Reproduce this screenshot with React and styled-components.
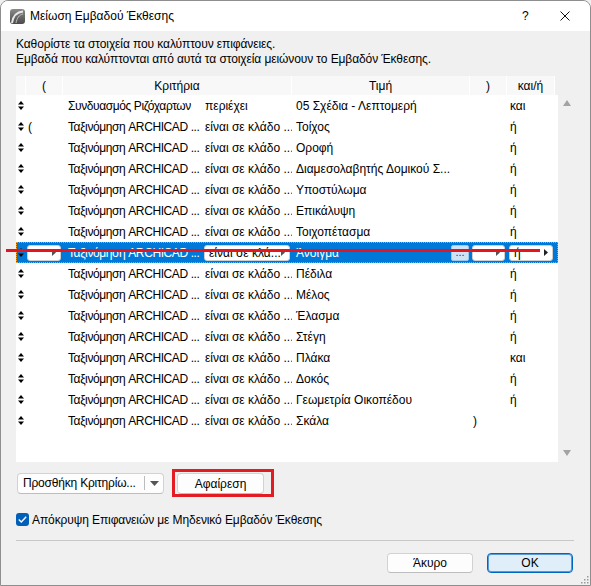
import styled, { createGlobalStyle } from "styled-components";

const GlobalStyle = createGlobalStyle`
  html, body {
    margin: 0;
    padding: 0;
    background: #f0f0f0;
  }
  body {
    font-family: "Liberation Sans", Arial, sans-serif;
    font-size: 12px;
    color: #000;
  }
  * {
    box-sizing: border-box;
  }
`;

const rows = [
  { open: "", crit: "Συνδυασμός Ριζόχαρτων", op: "περιέχει", value: "05 Σχέδια - Λεπτομερή", close: "", logic: "και" },
  { open: "(", crit: "Ταξινόμηση ARCHICAD ...", op: "είναι σε κλάδο ...", value: "Τοίχος", close: "", logic: "ή" },
  { open: "", crit: "Ταξινόμηση ARCHICAD ...", op: "είναι σε κλάδο ...", value: "Οροφή", close: "", logic: "ή" },
  { open: "", crit: "Ταξινόμηση ARCHICAD ...", op: "είναι σε κλάδο ...", value: "Διαμεσολαβητής Δομικού Σ...", close: "", logic: "ή" },
  { open: "", crit: "Ταξινόμηση ARCHICAD ...", op: "είναι σε κλάδο ...", value: "Υποστύλωμα", close: "", logic: "ή" },
  { open: "", crit: "Ταξινόμηση ARCHICAD ...", op: "είναι σε κλάδο ...", value: "Επικάλυψη", close: "", logic: "ή" },
  { open: "", crit: "Ταξινόμηση ARCHICAD ...", op: "είναι σε κλάδο ...", value: "Τοιχοπέτασμα", close: "", logic: "ή" },
  { open: "", crit: "Ταξινόμηση ARCHICAD ...", op: "είναι σε κλά...", value: "Άνοιγμα", close: "", logic: "ή", selected: true },
  { open: "", crit: "Ταξινόμηση ARCHICAD ...", op: "είναι σε κλάδο ...", value: "Πέδιλα", close: "", logic: "ή" },
  { open: "", crit: "Ταξινόμηση ARCHICAD ...", op: "είναι σε κλάδο ...", value: "Μέλος", close: "", logic: "ή" },
  { open: "", crit: "Ταξινόμηση ARCHICAD ...", op: "είναι σε κλάδο ...", value: "Έλασμα", close: "", logic: "ή" },
  { open: "", crit: "Ταξινόμηση ARCHICAD ...", op: "είναι σε κλάδο ...", value: "Στέγη", close: "", logic: "ή" },
  { open: "", crit: "Ταξινόμηση ARCHICAD ...", op: "είναι σε κλάδο ...", value: "Πλάκα", close: "", logic: "και" },
  { open: "", crit: "Ταξινόμηση ARCHICAD ...", op: "είναι σε κλάδο ...", value: "Δοκός", close: "", logic: "ή" },
  { open: "", crit: "Ταξινόμηση ARCHICAD ...", op: "είναι σε κλάδο ...", value: "Γεωμετρία Οικοπέδου", close: "", logic: "ή" },
  { open: "", crit: "Ταξινόμηση ARCHICAD ...", op: "είναι σε κλάδο ...", value: "Σκάλα", close: ")", logic: "" },
];

function AppIcon() {
  return (
    <svg width="15" height="15" viewBox="0 0 15 15">
      <defs>
        <linearGradient id="ac" x1="0" y1="0" x2="0" y2="1">
          <stop offset="0" stopColor="#8a8a8a" />
          <stop offset="1" stopColor="#4a4a4a" />
        </linearGradient>
      </defs>
      <rect x="0" y="0" width="15" height="15" rx="3" fill="url(#ac)" />
      <path d="M2 14 C3 7 7 3 13 2.5" stroke="#e8e8e8" strokeWidth="2" fill="none" />
      <path d="M6 14 C7 9 9 6 13 5" stroke="#bdbdbd" strokeWidth="1" fill="none" />
    </svg>
  );
}

function SortIcon() {
  return (
    <svg width="6" height="9" viewBox="0 0 6 9">
      <path d="M0 3.5 L3 0 L6 3.5 Z" fill="#000" />
      <path d="M0 5.5 L3 9 L6 5.5 Z" fill="#000" />
    </svg>
  );
}

function RightArrow({ dark }) {
  return (
    <svg width="4" height="7" viewBox="0 0 4 7">
      <path d="M0 0 L4 3.5 L0 7 Z" fill={dark ? "#222" : "#555"} />
    </svg>
  );
}

export default function App() {
  return (
    <>
      <GlobalStyle />
      <Window>
        <TitleBar>
          <AppIcon />
          <Title>Μείωση Εμβαδού Έκθεσης</Title>
          <TitleHelp>?</TitleHelp>
          <TitleClose>
            <svg width="10" height="10" viewBox="0 0 10 10">
              <path d="M0.5 0.5 L9.5 9.5 M9.5 0.5 L0.5 9.5" stroke="#111" strokeWidth="1" />
            </svg>
          </TitleClose>
        </TitleBar>

        <Body>
          <Description>
            Καθορίστε τα στοιχεία που καλύπτουν επιφάνειες.
            <br />
            Εμβαδά που καλύπτονται από αυτά τα στοιχεία μειώνουν το Εμβαδόν Έκθεσης.
          </Description>

          <Table>
            <ListPane>
              <HeaderStrip>
                <HeaderRow>
                  <HeadCell />
                  <HeadCell>(</HeadCell>
                  <HeadCell $span={2}>Κριτήρια</HeadCell>
                  <HeadCell>Τιμή</HeadCell>
                  <HeadCell>)</HeadCell>
                  <HeadCell>και/ή</HeadCell>
                </HeaderRow>
              </HeaderStrip>

              {rows.map((r, i) =>
                r.selected ? (
                  <Row key={i} $selected>
                    <SortCell>
                      <SortIcon />
                    </SortCell>
                    <Cell $pad={1}>
                      <Combo $width={34}>
                        <span />
                        <RightArrow />
                      </Combo>
                    </Cell>
                    <CritCell>{r.crit}</CritCell>
                    <Cell $pad={3}>
                      <Combo $width={86}>
                        <span>{r.op}</span>
                        <RightArrow />
                      </Combo>
                    </Cell>
                    <Cell $pad={4}>
                      <ValueText>{r.value}</ValueText>
                      <DotsButton>...</DotsButton>
                    </Cell>
                    <Cell $pad={2}>
                      <Combo $width={33}>
                        <span />
                        <RightArrow />
                      </Combo>
                    </Cell>
                    <Cell $pad={2}>
                      <Combo $width={44}>
                        <span>{r.logic}</span>
                        <RightArrow dark />
                      </Combo>
                    </Cell>
                    <RedLine />
                  </Row>
                ) : (
                  <Row key={i}>
                    <SortCell>
                      <SortIcon />
                    </SortCell>
                    <Cell $pad={2}>{r.open}</Cell>
                    <CritCell>{r.crit}</CritCell>
                    <Cell $pad={4}>{r.op}</Cell>
                    <Cell $pad={4}>{r.value}</Cell>
                    <Cell $pad={3}>{r.close}</Cell>
                    <Cell $pad={3}>{r.logic}</Cell>
                  </Row>
                )
              )}
            </ListPane>
            <ScrollBar>
              <svg width="8" height="6" viewBox="0 0 8 6">
                <path d="M0 6 L4 0 L8 6 Z" fill="#a3a3a3" />
              </svg>
              <svg width="8" height="6" viewBox="0 0 8 6">
                <path d="M0 0 L4 6 L8 0 Z" fill="#a3a3a3" />
              </svg>
            </ScrollBar>
          </Table>

          <ActionRow>
            <SplitButton>
              <SplitLabel>Προσθήκη Κριτηρίω...</SplitLabel>
              <SplitDivider />
              <SplitArrow>
                <svg width="9" height="5" viewBox="0 0 9 5">
                  <path d="M0 0 L9 0 L4.5 5 Z" fill="#555" />
                </svg>
              </SplitArrow>
            </SplitButton>
            <HighlightFrame>
              <PushButton $width={87} $height={21}>Αφαίρεση</PushButton>
            </HighlightFrame>
          </ActionRow>

          <CheckRow>
            <CheckBox>
              <svg width="9" height="7" viewBox="0 0 9 7">
                <path d="M0.8 3.6 L3.3 6 L8.2 0.8" stroke="#fff" strokeWidth="1.4" fill="none" />
              </svg>
            </CheckBox>
            <span>Απόκρυψη Επιφανειών με Μηδενικό Εμβαδόν Έκθεσης</span>
          </CheckRow>

          <Separator />

          <Footer>
            <PushButton $width={86} $height={20}>Άκυρο</PushButton>
            <PushButton $width={86} $height={20} $primary>OK</PushButton>
          </Footer>
        </Body>

        <Grip>
          <svg width="8" height="8" viewBox="0 0 8 8">
            <rect x="6" y="0" width="1.5" height="1.5" fill="#9a9a9a" />
            <rect x="3" y="3" width="1.5" height="1.5" fill="#9a9a9a" />
            <rect x="6" y="3" width="1.5" height="1.5" fill="#9a9a9a" />
            <rect x="0" y="6" width="1.5" height="1.5" fill="#9a9a9a" />
            <rect x="3" y="6" width="1.5" height="1.5" fill="#9a9a9a" />
            <rect x="6" y="6" width="1.5" height="1.5" fill="#9a9a9a" />
          </svg>
        </Grip>
      </Window>
    </>
  );
}

const columns = "10px 37px 138px 91px 178px 37px 1fr";

const Window = styled.div`
  position: relative;
  width: 591px;
  height: 586px;
  border: 1px solid #8e8e8e;
  border-radius: 8px 8px 0 0;
  background: #f0f0f0;
  display: flex;
  flex-direction: column;
  overflow: hidden;
`;

const TitleBar = styled.div`
  height: 30px;
  flex-shrink: 0;
  background: #ffffff;
  display: flex;
  align-items: center;
  padding-left: 9px;
`;

const Title = styled.span`
  margin-left: 5px;
  font-size: 12px;
`;

const TitleHelp = styled.span`
  margin-left: auto;
  width: 10px;
  font-size: 12px;
`;

const TitleClose = styled.span`
  display: flex;
  margin-left: 28px;
  margin-right: 20px;
`;

const Body = styled.div`
  display: flex;
  flex-direction: column;
  padding: 6px 15px 0 15px;
`;

const Description = styled.div`
  line-height: 15px;
  letter-spacing: -0.1px;
`;

const Table = styled.div`
  margin-top: 9px;
  height: 386px;
  display: flex;
`;

const ListPane = styled.div`
  width: 542px;
  background: #ffffff;
  display: flex;
  flex-direction: column;
`;

const HeaderStrip = styled.div`
  background: #f0f0f0;
  height: 19px;
  flex-shrink: 0;
`;

const HeaderRow = styled.div`
  width: 539px;
  height: 19px;
  display: grid;
  grid-template-columns: ${columns};
  background: #f8f8f8;
`;

const HeadCell = styled.div`
  grid-column: span ${(p) => p.$span || 1};
  display: flex;
  align-items: center;
  justify-content: center;
  border-right: 1px solid #ffffff;
  white-space: nowrap;
`;

const Row = styled.div`
  position: relative;
  height: 21px;
  flex-shrink: 0;
  display: grid;
  grid-template-columns: ${columns};
  background: ${(p) => (p.$selected ? "#0078d7" : "transparent")};
  color: ${(p) => (p.$selected ? "#ffffff" : "#000000")};
  outline: ${(p) => (p.$selected ? "1px dotted #f59a1b" : "none")};
  outline-offset: -1px;
`;

const SortCell = styled.div`
  display: flex;
  align-items: center;
  justify-content: center;
`;

const Cell = styled.div`
  display: flex;
  align-items: center;
  padding-left: ${(p) => p.$pad}px;
  white-space: nowrap;
  overflow: hidden;
`;

const CritCell = styled.div`
  display: flex;
  align-items: center;
  padding-left: 5px;
  white-space: nowrap;
  letter-spacing: -0.4px;
`;

const ValueText = styled.span`
  flex: 1;
`;

const Combo = styled.div`
  width: ${(p) => p.$width}px;
  height: 16px;
  flex-shrink: 0;
  display: flex;
  align-items: center;
  justify-content: space-between;
  padding: 0 4px 0 4px;
  background: #ffffff;
  border: 1px solid #cfcfcf;
  border-radius: 3px;
  color: #000;
  overflow: hidden;
`;

const DotsButton = styled.div`
  width: 18px;
  height: 16px;
  margin-right: 1px;
  flex-shrink: 0;
  display: flex;
  align-items: center;
  justify-content: center;
  background: #cde4f7;
  border: 1px solid #9ec6e8;
  border-radius: 2px;
  color: #3a2d5c;
  font-size: 11px;
  line-height: 1;
`;

const RedLine = styled.div`
  position: absolute;
  left: -10px;
  top: 7px;
  width: 534px;
  height: 3px;
  background: #e5141d;
`;

const ScrollBar = styled.div`
  width: 17px;
  display: flex;
  flex-direction: column;
  align-items: center;
  justify-content: space-between;
  padding: 24px 0 6px 0;
`;

const ActionRow = styled.div`
  margin-top: 7px;
  height: 28px;
  display: flex;
  align-items: center;
`;

const SplitButton = styled.div`
  margin-left: 1px;
  width: 147px;
  height: 21px;
  display: flex;
  align-items: center;
  background: #fdfdfd;
  border: 1px solid #d2d2d2;
  border-bottom-color: #bdbdbd;
  border-radius: 4px;
`;

const SplitLabel = styled.span`
  padding-left: 5px;
  width: 126px;
  white-space: nowrap;
  letter-spacing: -0.2px;
`;

const SplitDivider = styled.span`
  width: 1px;
  height: 14px;
  background: #bcbcbc;
`;

const SplitArrow = styled.span`
  flex: 1;
  display: flex;
  justify-content: center;
`;

const HighlightFrame = styled.div`
  margin-left: 8px;
  width: 102px;
  height: 28px;
  border: 3px solid #e31b23;
  display: flex;
  align-items: flex-start;
  padding: 1px 0 0 2px;
`;

const PushButton = styled.div`
  width: ${(p) => p.$width}px;
  height: ${(p) => p.$height}px;
  display: flex;
  align-items: center;
  justify-content: center;
  background: ${(p) => (p.$primary ? "#e0eef9" : "#fdfdfd")};
  border: 1px solid ${(p) => (p.$primary ? "#0067c0" : "#d2d2d2")};
  border-bottom-color: ${(p) => (p.$primary ? "#0067c0" : "#bdbdbd")};
  box-shadow: ${(p) => (p.$primary ? "inset 0 0 0 1px #5a9ad8" : "none")};
  border-radius: 4px;
`;

const CheckRow = styled.div`
  margin-top: 16px;
  height: 13px;
  display: flex;
  align-items: center;
  gap: 3px;
  white-space: nowrap;
  letter-spacing: -0.1px;
`;

const CheckBox = styled.span`
  width: 13px;
  height: 13px;
  border-radius: 3px;
  background: #005fb8;
  display: flex;
  align-items: center;
  justify-content: center;
`;

const Separator = styled.div`
  margin-top: 14px;
  margin-right: 1px;
  height: 1px;
  background: #c8c8c8;
`;

const Footer = styled.div`
  margin-top: 12px;
  margin-right: 2px;
  display: flex;
  justify-content: flex-end;
  gap: 14px;
`;

const Grip = styled.div`
  position: absolute;
  right: 1px;
  bottom: 1px;
  display: flex;
`;
